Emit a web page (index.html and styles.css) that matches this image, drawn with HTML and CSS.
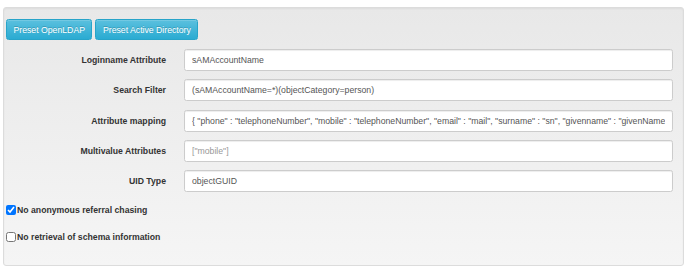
FILE: index.html
```html
<!DOCTYPE html>
<html>
<head>
<meta charset="utf-8">
<link rel="stylesheet" href="styles.css">
</head>
<body>
<div class="well">
  <div class="btn-row">
    <button class="btn">Preset OpenLDAP</button>
    <button class="btn">Preset Active Directory</button>
  </div>
  <div class="form">
    <div class="row">
      <label class="lbl">Loginname Attribute</label>
      <input class="field" type="text" value="sAMAccountName">
    </div>
    <div class="row">
      <label class="lbl">Search Filter</label>
      <input class="field" type="text" value="(sAMAccountName=*)(objectCategory=person)">
    </div>
    <div class="row">
      <label class="lbl">Attribute mapping</label>
      <input class="field" type="text" value='{ "phone" : "telephoneNumber", "mobile" : "telephoneNumber", "email" : "mail", "surname" : "sn", "givenname" : "givenName" }'>
    </div>
    <div class="row">
      <label class="lbl">Multivalue Attributes</label>
      <input class="field" type="text" placeholder='["mobile"]'>
    </div>
    <div class="row">
      <label class="lbl">UID Type</label>
      <input class="field" type="text" value="objectGUID">
    </div>
  </div>
  <label class="check"><input type="checkbox" checked> No anonymous referral chasing</label>
  <label class="check"><input type="checkbox"> No retrieval of schema information</label>
</div>
</body>
</html>
```

FILE: styles.css
```css
html, body {
  margin: 0;
  padding: 0;
  background: #fff;
}
body {
  font-family: "Liberation Sans", Arial, sans-serif;
  font-size: 8.7px;
  color: #333;
}
.well {
  margin: 7px 6px 0 3px;
  height: 259px;
  box-sizing: border-box;
  border: 1px solid #dcdcdc;
  border-radius: 3px;
  background: linear-gradient(to bottom, #e8e8e8 0%, #f5f5f5 100%);
  box-shadow: inset 0 1px 2px rgba(0,0,0,0.05);
  padding: 11px 10px 0 2px;
}
.btn-row {
  display: flex;
  gap: 3px;
}
.btn {
  height: 21px;
  padding: 0 6.5px;
  font-family: inherit;
  font-size: 8.7px;
  color: #fff;
  border: 1px solid #28a4c9;
  border-radius: 2.5px;
  background: linear-gradient(to bottom, #5bc0de 0%, #2aabd2 100%);
  box-shadow: inset 0 1px 0 rgba(255,255,255,0.15);
  text-shadow: 0 -1px 0 rgba(0,0,0,0.2);
}
.form {
  margin-top: 9px;
  display: flex;
  flex-direction: column;
  gap: 8.25px;
}
.row {
  display: flex;
  align-items: center;
  gap: 18px;
}
.lbl {
  width: 160px;
  flex: none;
  text-align: right;
  font-weight: bold;
  color: #333;
}
.field {
  flex: 1;
  min-width: 0;
  height: 22px;
  box-sizing: border-box;
  padding: 0 7px;
  font-family: inherit;
  font-size: 8.7px;
  color: #555;
  background: #fff;
  border: 1px solid #ccc;
  border-radius: 2.5px;
  box-shadow: inset 0 1px 1px rgba(0,0,0,0.075);
}
.field::placeholder {
  color: #999;
}
.check {
  display: flex;
  align-items: center;
  gap: 1px;
  font-weight: bold;
  color: #333;
  height: 10px;
  margin-top: 13px;
  margin-left: 0;
}
.check + .check {
  margin-top: 17px;
}
.check input {
  width: 10px;
  height: 10px;
  margin: 0;
  accent-color: #0075ff;
}
```
